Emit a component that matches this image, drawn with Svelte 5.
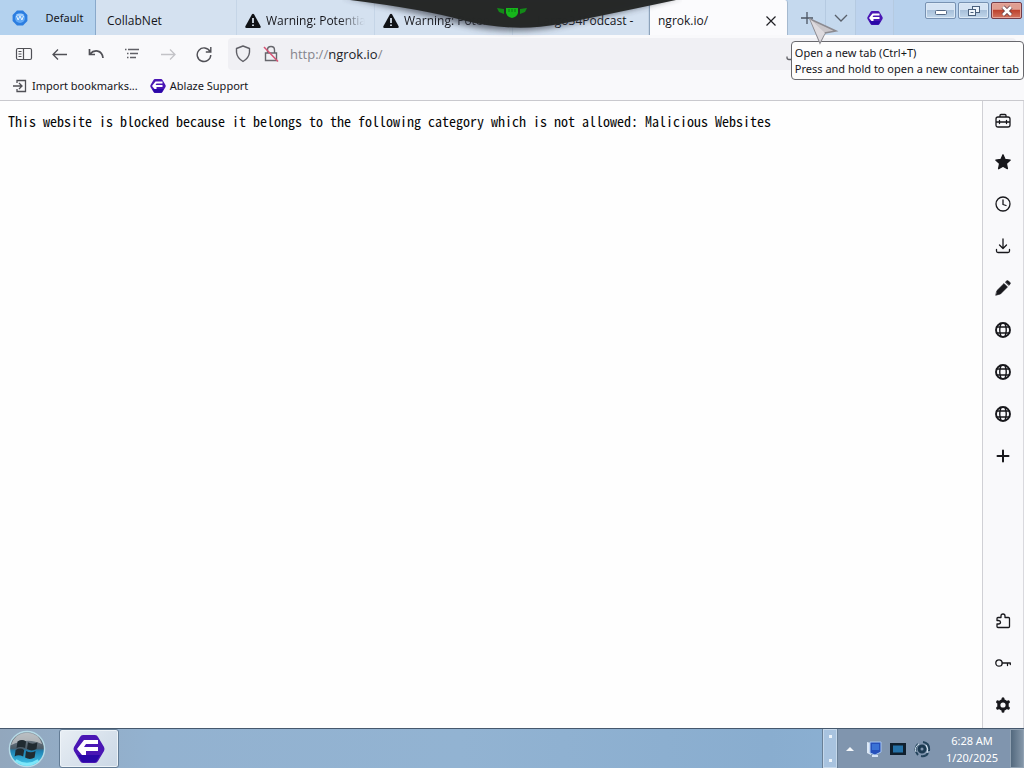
<script>
  const tabs = [
    { title: 'CollabNet', kind: 'plain' },
    { title: 'Warning: Potential', kind: 'warn' },
    { title: 'Warning: Potential', kind: 'warn' },
    { title: 'Largo34Podcast -', kind: 'pod' }
  ];
  const tools = [
    { id: 'toolbox', label: 'Toolbox' },
    { id: 'star', label: 'Bookmarks' },
    { id: 'clock', label: 'History' },
    { id: 'download', label: 'Downloads' },
    { id: 'pencil', label: 'Notes' },
    { id: 'globe', label: 'Web panel 1' },
    { id: 'globe', label: 'Web panel 2' },
    { id: 'globe', label: 'Web panel 3' },
    { id: 'plus', label: 'Add web panel' }
  ];
  const bottomTools = [
    { id: 'puzzle', label: 'Extensions' },
    { id: 'key', label: 'Passwords' },
    { id: 'gear', label: 'Settings' }
  ];
  let url = $state('http://ngrok.io/');
</script>

{#snippet floorp()}
  <svg class="floorp" viewBox="0 0 32 32" aria-hidden="true">
    <path d="M10 2h12q2 0 3 2l6 10q1 2 0 4l-6 10q-1 2-3 2H10q-2 0-3-2L1 18q-1-2 0-4L7 4q1-2 3-2z" fill="#4a16b4" />
    <path d="M5 22h22l-4 7H9z" fill="#2908a8" />
    <path d="M11 7h14v4H13l-2 3h14v4H13v4H9l-5-6z" fill="#fff" />
  </svg>
{/snippet}

{#snippet warning()}
  <svg class="i16" viewBox="0 0 16 16" aria-hidden="true">
    <path d="M7 1.2q1-1 2 0l6.600 12q.6 1.800-1 1.800H1.400q-1.600 0-1-1.800z" fill="#101216" />
    <path d="M8 5v5M8 11.500v1.600" stroke="#dfe9f5" stroke-width="1.700" />
  </svg>
{/snippet}

{#snippet icon(id)}
  <svg class="tool" viewBox="0 0 16 16" aria-hidden="true" fill="none" stroke="#18181c" stroke-width="1.300" stroke-linecap="round" stroke-linejoin="round">
    {#if id === 'toolbox'}
      <path d="M5 4V2.500q0-1 1-1h4q1 0 1 1V4M3 4h10q2 0 2 2v6q0 2-2 2H3q-2 0-2-2V6q0-2 2-2zM1 9h14M4.500 7.500v3M11.500 7.500v3" />
    {:else if id === 'star'}
      <path d="M8 .8l2.100 4.700 5.100.6-3.800 3.500 1 5.100L8 12.200l-4.400 2.500 1-5.100L.8 6.100l5.100-.6z" fill="#18181c" />
    {:else if id === 'clock'}
      <circle cx="8" cy="8" r="7" /><path d="M8 4v4.500l3 1" />
    {:else if id === 'download'}
      <path d="M8 1v9M4.500 7L8 10.500 11.500 7M1.500 11.500V13q0 1.500 1.500 1.500h10q1.500 0 1.500-1.500v-1.500" />
    {:else if id === 'pencil'}
      <path d="M2 10.500L9 3.500l3.500 3.500-7 7L1 15.200zM10.500 2l1-1q1-.8 2 0l1.500 1.500q.8.8 0 1.800l-1 1z" fill="#18181c" stroke-width=".6" />
    {:else if id === 'globe'}
      <circle cx="8" cy="8" r="7" stroke-width="1.900" />
      <path d="M1.500 5h13M1.500 11h13M6 1.500Q3.500 8 6 14.500M10 1.500Q12.500 8 10 14.500" stroke-width="1.400" />
    {:else if id === 'plus'}
      <path d="M8 2.500v11M2.500 8h11" stroke-width="2" />
    {:else if id === 'puzzle'}
      <path d="M3 4.500h3V3q0-2 2-2t2 2v1.500h3.500q1 0 1 1v8q0 1-1 1H3q-1 0-1-1v-2.500h1.500q2 0 2-1.700t-2-1.800H2v-2q0-1 1-1z" />
    {:else if id === 'key'}
      <circle cx="4" cy="8" r="3.200" /><path d="M7.200 8H15.300M12.500 8v2.500M15.300 8v1.500" />
    {:else if id === 'gear'}
      <circle cx="8" cy="8" r="4.200" stroke-width="3.200" />
      <path d="M8 1.800v1M8 13.200v1M2.600 4.900l.9.500M12.500 10.600l.9.500M2.600 11.100l.9-.5M12.500 5.400l.9-.5" stroke-width="3" />
    {/if}
  </svg>
{/snippet}

<div class="screen">
  <header>
    <div class="tabstrip">
      <button class="workspace">
        <svg class="i16" viewBox="0 0 16 16" aria-hidden="true"><path d="M5 .6h6L15.400 5v6L11 15.400H5L.6 11V5z" fill="#2b7de0" /><circle cx="8" cy="8" r="5" fill="#62a9f5" /><path d="M4.500 6l1.600 4L8 6l1.900 4 1.600-4M4.500 5h7" stroke="#e5f3ff" fill="none" /></svg>
        <span>Default</span>
      </button>
      <div class="tabs" role="tablist" aria-label="Tabs">
        {#each tabs as tab}
          <button class="tab {tab.kind}" role="tab" aria-selected="false">
            {#if tab.kind === 'warn'}{@render warning()}{/if}
            <span>{tab.title}</span>
          </button>
        {/each}
        <div class="active">
          <button class="current" role="tab" aria-selected="true">ngrok.io/</button>
          <button class="close" aria-label="Close tab"><svg viewBox="0 0 12 12" aria-hidden="true"><path d="M1.500 1.500l9 9M10.500 1.500l-9 9" stroke="#202024" stroke-width="1.200" /></svg></button>
        </div>
      </div>
      <button class="strip plus" aria-label="Open a new tab"><svg class="i16" viewBox="0 0 16 16" aria-hidden="true"><path d="M8 2v12M2 8h12" stroke="#4c5563" stroke-width="1.300" /></svg></button>
      <button class="strip list" aria-label="List all tabs"><svg class="i16" viewBox="0 0 16 16" aria-hidden="true"><path d="M2 5l6 6 6-6" fill="none" stroke="#59606b" stroke-width="1.300" /></svg></button>
      <button class="strip brand" aria-label="Browser home">{@render floorp()}</button>
      <div class="window">
        <button aria-label="Minimize"><svg viewBox="0 0 16 14" aria-hidden="true"><rect x="2.500" y="6.500" width="11" height="4" rx="1" fill="#fff" stroke="#536783" /></svg></button>
        <button aria-label="Restore"><svg viewBox="0 0 16 14" aria-hidden="true" fill="#eef5fc" stroke="#49607c"><rect x="6.500" y="2.500" width="7" height="6" /><rect x="2.500" y="5.500" width="7" height="6" /><path d="M4.500 8.500h3" /></svg></button>
        <button class="shut" aria-label="Close"><svg viewBox="0 0 16 14" aria-hidden="true"><path d="M4 3l8 8M12 3l-8 8" stroke="#623b42" stroke-width="4.200" /><path d="M4 3l8 8M12 3l-8 8" stroke="#fff" stroke-width="2.600" /></svg></button>
      </div>
    </div>

    <nav class="toolbar" aria-label="Navigation">
      <button aria-label="Toggle sidebar"><svg class="i18" viewBox="0 0 18 18" aria-hidden="true" fill="none" stroke="#505056" stroke-width="1.200"><rect x="1.500" y="3.500" width="15" height="11" rx="1.500" /><path d="M8.500 3.500v11M3.500 6.500h3M3.500 9h3M3.500 11.500h3" /></svg></button>
      <button aria-label="Back"><svg class="i18" viewBox="0 0 18 18" aria-hidden="true" fill="none" stroke="#505056" stroke-width="1.300"><path d="M16 9.500H2M7 4.500L2 9.500l5 5" /></svg></button>
      <button aria-label="Undo close tab"><svg class="i18" viewBox="0 0 18 18" aria-hidden="true" fill="none" stroke="#505056" stroke-width="1.700"><path d="M2.500 4v5.500H8M3 9C7 4.500 15 4.500 16 13" /></svg></button>
      <button aria-label="Tab list"><svg class="i18" viewBox="0 0 18 18" aria-hidden="true" stroke="#606066" stroke-width="1.300"><path d="M5 4.500h11M7 8.500h8M7 12.500h6M2 4.500h1.500M4 8.500h1.500M4 12.500h1.500" /></svg></button>
      <button aria-label="Forward" disabled><svg class="i18" viewBox="0 0 18 18" aria-hidden="true" fill="none" stroke="#c3c3c7" stroke-width="1.300"><path d="M2 9.500h14M11 4.500l5 5-5 5" /></svg></button>
      <button aria-label="Reload"><svg class="i18" viewBox="0 0 18 18" aria-hidden="true" fill="none" stroke="#505056" stroke-width="1.400"><path d="M15 6.500A6.800 6.800 0 1 0 15.800 10M15.800 2v5h-5" /></svg></button>
      <div class="address">
        <svg class="i18" viewBox="0 0 18 18" aria-hidden="true"><path d="M9 1l6.500 2.500v3.800Q15 13 9 16.500 3 13 2.500 7.300V3.500z" fill="none" stroke="#5f5f66" stroke-width="1.400" stroke-linejoin="round" /></svg>
        <svg class="i18 lock" viewBox="0 0 18 18" aria-hidden="true" fill="none"><path d="M5.500 8V5q0-3.500 3.500-3.500T12.500 5v3M3.500 8h11v7.500h-11z" stroke="#66666c" stroke-width="1.400" /><path d="M2 2l14 14.500" stroke="#d65374" stroke-width="1.500" /></svg>
        <div class="url"><input aria-label="Address" bind:value={url} /><span class="paint" aria-hidden="true"><i>http://</i>ngrok.io<i>/</i></span></div>
        <svg class="i16" viewBox="0 0 16 16" aria-hidden="true"><path d="M11 2L6 5M1 10.500v1q0 2 2 2h8" fill="none" stroke="#606066" stroke-width="1.300" /></svg>
      </div>
    </nav>

    <nav class="bookmarks" aria-label="Bookmarks">
      <button><svg class="i16" viewBox="0 0 16 16" aria-hidden="true" fill="none" stroke="#505056" stroke-width="1.300"><path d="M5 5V2.500h8.500v11H5V11M1 8h9M7 5l3 3-3 3" /></svg><span>Import bookmarks...</span></button>
      <button>{@render floorp()}<span>Ablaze Support</span></button>
    </nav>
  </header>

  <div class="body">
    <main><p>This website is blocked because it belongs to the following category which is not allowed: Malicious Websites</p></main>
    <aside aria-label="Sidebar">
      {#each tools as t}<button aria-label={t.label}>{@render icon(t.id)}</button>{/each}
      <div class="spring"></div>
      {#each bottomTools as t}<button aria-label={t.label}>{@render icon(t.id)}</button>{/each}
    </aside>
  </div>

  <footer>
    <button class="start" aria-label="Start">
      <svg viewBox="0 0 40 40" aria-hidden="true">
        <defs>
          <linearGradient id="orb" x2="0" y2="1"><stop offset="0" stop-color="#89949d" /><stop offset=".48" stop-color="#4d5b66" /><stop offset=".55" stop-color="#1e7fb0" /><stop offset="1" stop-color="#42cdf1" /></linearGradient>
        </defs>
        <circle cx="20" cy="20" r="18.500" fill="url(#orb)" stroke="#b6dae6" stroke-width="1.500" />
        <path d="M3 16Q8 3 20 3q12 0 16 12-15-8-33 1z" fill="#e0e0df" opacity=".6" />
        <path d="M10 12q5-3 9 0l-1 7q-5-2-9 0zM21 13q5 3 10 0l-1 7q-5 3-10 0zM8 21q5-3 9 0l-1 7q-5-3-9 0zM19 22q5 3 10 0l-1 7q-5 3-10 0z" fill="#202b31" />
        <path d="M8 32q12 8 24 0" fill="none" stroke="#8ff1ff" stroke-width="3" opacity=".8" />
      </svg>
    </button>
    <button class="task" aria-label="Browser window">{@render floorp()}</button>
    <div class="grip" aria-hidden="true"><i></i><i></i></div>
    <div class="tray">
      <button aria-label="Show hidden icons"><svg class="i16" viewBox="0 0 16 16" aria-hidden="true"><path d="M4 10l4-4 4 4z" fill="#f4f7fa" /></svg></button>
      <button aria-label="Display"><svg class="i18" viewBox="0 0 18 18" aria-hidden="true"><path d="M2 2l4 1v12l-4-2z" fill="#dce8f5" /><path d="M5 2h11v10l-6 3-5-2z" fill="#2650ba" stroke="#a6c5f1" /><path d="M7 4h7v6H7z" fill="#3a72d5" /><path d="M7 16h6" stroke="#d6e3f5" stroke-width="2" /></svg></button>
      <button aria-label="Monitor"><svg class="i18" viewBox="0 0 18 18" aria-hidden="true"><rect x="1" y="3" width="16" height="12" fill="#10202e" /><rect x="4" y="5.500" width="10" height="7" fill="#2572a8" /></svg></button>
      <button aria-label="Sync"><svg class="i18" viewBox="0 0 18 18" aria-hidden="true" fill="none"><circle cx="9" cy="9" r="3" stroke="#1c3a51" stroke-width="3" /><path d="M5 15Q0 9 5 4M10 2q7 1 6 9M8 16q5 1 7-3" stroke="#25455d" stroke-width="2" /><path d="M3 12Q1 7 6 4M13 5q3 4 1 8" stroke="#d7e8f3" /></svg></button>
      <div class="time"><span>6:28 AM</span><span>1/20/2025</span></div>
    </div>
    <button class="desktop" aria-label="Show desktop"></button>
  </footer>

  <svg class="notch" viewBox="0 0 340 44" aria-hidden="true">
    <defs><filter id="soft" x="-10%" y="-30%" width="120%" height="180%"><feGaussianBlur stdDeviation="3" /></filter></defs>
    <path d="M0 -4Q70 12 118 24Q170 37 222 25Q270 15 340 -4z" fill="#303640" opacity=".65" filter="url(#soft)" />
    <path d="M8 0Q80 9 120 20Q170 33 218 24Q268 14 334 0z" fill="#252726" opacity=".98" />
    <path d="M155 8l7 1v5l-5-2zM185 8l-7 1v5l5-2z" fill="#138a18" />
    <path d="M164 8h12v5q-1 4-6 5-5-1-6-5z" fill="#16b51b" /><path d="M167 9v3M170 9v3M173 9v3" stroke="#087a10" />
  </svg>

  <div class="tip" role="tooltip"><span>Open a new tab (Ctrl+T)</span><span>Press and hold to open a new container tab</span></div>
  <svg class="pointer" viewBox="0 0 32 28" aria-hidden="true"><path d="M2 2l26 12-11 2-5 10z" fill="#c9c6ca" stroke="#8c8b91" stroke-width="1.500" /><path d="M2 2l15 14-5 9z" fill="#dddade" /></svg>
</div>

<style>
  :global(body) { margin: 0; }
  * { box-sizing: border-box; }
  button { border: 0; padding: 0; background: none; font: inherit; color: inherit; display: flex; align-items: center; justify-content: center; }
  svg { display: block; flex: none; }
  .screen { position: relative; height: 100vh; display: flex; flex-direction: column; overflow: hidden; background: #fefefe; color: #15151a; font: 12px/16px "Open Sans", "Noto Sans", sans-serif; }
  .i16, .tool, .floorp { width: 16px; height: 16px; }
  .i18 { width: 18px; height: 18px; }
  header { flex: none; background: #f9f9fb; border-bottom: 1px solid #c9c9ce; }
  .tabstrip { display: flex; height: 35px; background: #b7d1ed; }
  .workspace { width: 96px; gap: 18px; background: #b4d2ee; border-right: 1px solid #89a9cb; }
  .workspace span { font-size: 11px; font-family: "Noto Sans", sans-serif; }
  .tabs { flex: 1; min-width: 0; display: flex; }
  .tab { flex: 0 1 138px; min-width: 0; gap: 5px; padding: 6px 2px 0 8px; justify-content: flex-start; background: #d4e1f0; border-right: 1px solid #c5d5e7; white-space: nowrap; }
  .plain { flex-basis: 141px; padding-left: 11px; }
  .warn span { mask-image: linear-gradient(to right, #000 70%, transparent 96%); }
  .pod { flex-basis: 136px; padding-left: 24px; }
  .active { flex: 1; min-width: 120px; display: flex; justify-content: space-between; padding: 6px 8px 0; background: #fbfbfd; border-left: 1px solid #8ca2ba; border-right: 1px solid #a5b9cf; border-radius: 3px 3px 0 0; }
  .close { width: 16px; }
  .close svg { width: 12px; height: 12px; }
  .strip { background: #c5d9ee; border-right: 1px solid #b5cae1; }
  .plus { width: 38px; }
  .list { width: 30px; }
  .brand { width: 38px; background: #bdd3ee; }
  .window { display: flex; gap: 2px; width: 130px; padding: 2px 2px 0 0; justify-content: flex-end; align-items: flex-start; }
  .window button { width: 31px; height: 17px; border: 1px solid #7892b2; border-radius: 2px; background: linear-gradient(#d5e3f3 0 45%, #a8c0da 50%, #c2d7eb); box-shadow: inset 0 0 0 1px #dce9f6; }
  .window svg { width: 16px; height: 14px; }
  .window .shut { border-color: #743d49; background: linear-gradient(#df9e91 0 42%, #bd412d 48%, #d27460); box-shadow: inset 0 0 0 1px #e6a79c; }
  .toolbar { display: flex; align-items: center; height: 37px; padding: 0 8px 0 6px; }
  .toolbar > button { width: 36px; height: 32px; }
  .address { flex: 1; min-width: 0; display: flex; align-items: center; gap: 10px; height: 32px; margin-left: 6px; padding: 0 214px 0 6px; border-radius: 4px; background: #f0f0f4; }
  .url { position: relative; flex: 1; font-size: 13px; line-height: 18px; }
  .url input { display: block; width: 100%; border: 0; padding: 0; background: none; outline: 0; font: inherit; color: transparent; }
  .paint { position: absolute; inset: 0; pointer-events: none; color: #222228; }
  .paint i { font-style: normal; color: #85858c; }
  .bookmarks { display: flex; align-items: center; gap: 12px; height: 28px; padding-left: 12px; font-family: "Noto Sans", sans-serif; font-size: 11px; }
  .bookmarks button { gap: 4px; }
  .body { flex: 1; min-height: 0; display: flex; }
  main { flex: 1; min-width: 0; padding: 12px 8px; }
  main p { margin: 0; color: #050505; font: 14px/16px "Noto Sans Mono CJK SC", "Liberation Mono", monospace; white-space: pre-wrap; }
  aside { width: 42px; display: flex; flex-direction: column; padding-bottom: 2px; background: #f9f9fb; border-left: 1px solid #d0d0d5; border-right: 1px solid #d9d9de; }
  aside button { width: 40px; height: 42px; flex: none; }
  aside > button:first-child { height: 40px; }
  .spring { flex: 1; }
  footer { flex: none; display: flex; height: 40px; border-top: 1px solid #46586d; background: linear-gradient(to right, #92a7bd, #93b2d0 15%, #92b3d2 45%, #89adcf 75%, #8eb5da); }
  .start { width: 54px; }
  .start svg { width: 38px; height: 38px; }
  .task { width: 60px; margin-left: 5px; border: 1px solid #637c95; border-radius: 3px; background: linear-gradient(135deg, #e8eef4, #cad7e5); box-shadow: inset 0 0 0 1px #edf3f8; }
  .task .floorp { width: 32px; height: 32px; }
  .grip { width: 16px; margin-left: auto; display: flex; flex-direction: column; align-items: center; justify-content: space-between; padding: 6px 0; background: #a8c3df; border: 1px solid #698097; border-width: 0 1px; box-shadow: inset 0 0 0 1px #c5d8eb; }
  .grip i { width: 3px; height: 3px; background: #eef5fb; }
  .tray { display: flex; align-items: center; background: #8095ae; }
  .tray button { width: 24px; height: 38px; }
  .time { width: 76px; display: flex; flex-direction: column; align-items: center; color: #fff; font: 11px/17px "Noto Sans", sans-serif; }
  .desktop { width: 14px; border: 1px solid #91a2b3; background: linear-gradient(to right, #53697e, #8496a8); }
  .notch { position: absolute; top: 0; left: 50%; width: 340px; height: 44px; margin-left: -170px; }
  .tip { position: absolute; top: 41px; right: 0; display: flex; flex-direction: column; padding: 3px 4px 2px 3px; border: 1px solid #68686d; border-radius: 4px; background: #fdfdfd; white-space: nowrap; font-family: "Noto Sans", sans-serif; font-size: 11px; }
  .pointer { position: absolute; top: 17px; right: 184px; width: 32px; height: 28px; }
</style>
